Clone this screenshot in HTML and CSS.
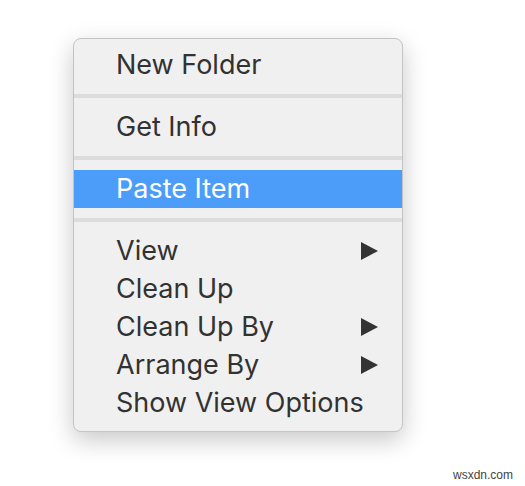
FILE: index.html
```html
<!DOCTYPE html>
<html lang="en">
  <head>
    <meta charset="UTF-8" />
    <meta name="viewport" content="width=device-width, initial-scale=1.0" />
    <title>Context Menu</title>
    <link rel="stylesheet" href="styles.css">
  </head>
  <body>
    <div class="menu">
      <div class="item">New Folder</div>
      <div class="sep"></div>
      <div class="item">Get Info</div>
      <div class="sep"></div>
      <div class="item active">Paste Item</div>
      <div class="sep"></div>
      <div class="item">View <span class="arrow"></span></div>
      <div class="item">Clean Up</div>
      <div class="item">Clean Up By <span class="arrow"></span></div>
      <div class="item">Arrange By <span class="arrow"></span></div>
      <div class="item">Show View Options</div>
    </div>
    <div class="mark">wsxdn.com</div>
  </body>
</html>
```

FILE: styles.css
```css
body {
  margin: 0;
  background: #fff;
  font-family: Inter, "Liberation Sans", Arial, sans-serif;
  height: 486px;
  position: relative;
}
.menu {
  margin: 38px 0 0 73px;
  width: 330px;
  box-sizing: border-box;
  padding: 7px 0 9px;
  background: #f0f0f0;
  border: 1px solid #c4c4c4;
  border-radius: 8px;
  box-shadow: 0 8px 24px rgba(0, 0, 0, 0.22);
}
.item {
  display: flex;
  align-items: center;
  justify-content: space-between;
  height: 38px;
  box-sizing: border-box;
  padding: 0 24px 2px 42px;
  font-size: 27px;
  color: #323232;
}
.item.active {
  background: #4c9cf9;
  color: #fff;
}
.sep {
  height: 4px;
  margin: 10px 0;
  background: #dcdcdc;
}
.arrow {
  width: 0;
  height: 0;
  margin-top: 2px;
  border-top: 9px solid transparent;
  border-bottom: 9px solid transparent;
  border-left: 17px solid #333;
}
.mark {
  position: absolute;
  right: 12px;
  bottom: 4px;
  font-family: "Liberation Sans", Arial, sans-serif;
  font-size: 12px;
  color: #444;
}
```
